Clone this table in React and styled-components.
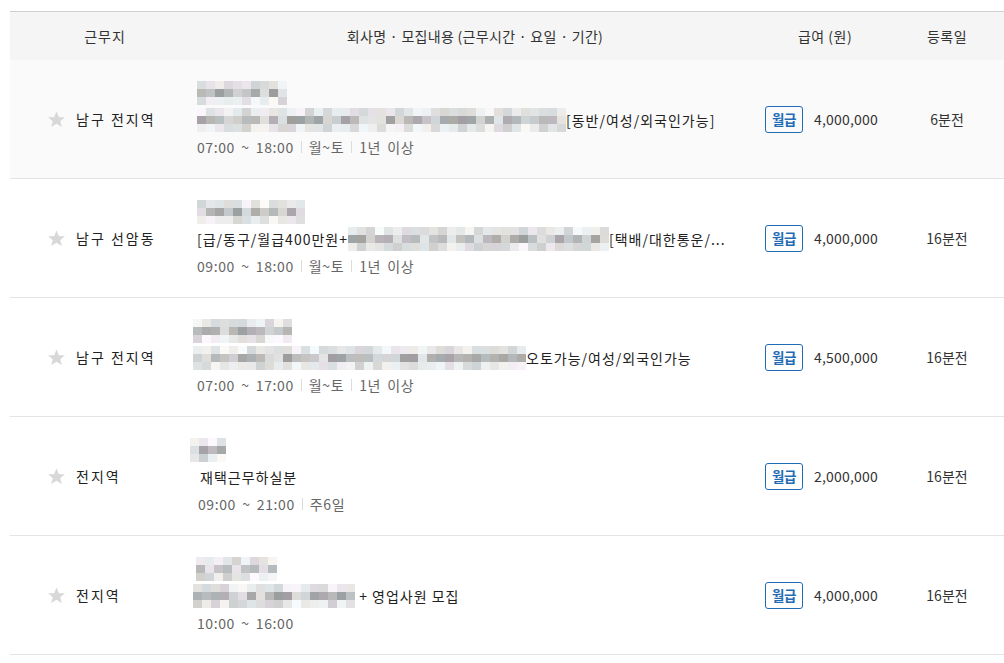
import React from 'react';
import styled, { createGlobalStyle } from 'styled-components';

const GlobalStyle = createGlobalStyle`
  html, body {
    margin: 0;
    padding: 0;
    background: #fff;
    font-family: 'Noto Sans CJK KR', 'Noto Sans', sans-serif;
    color: #222;
  }
`;

const Page = styled.div`
  padding: 11px 0 0 10px;
`;

const Table = styled.div`
  width: 994px;
  border-top: 1px solid #cfcfcf;
`;

const COLS = '180px 570px 130px 114px';

const HeadRow = styled.div`
  display: grid;
  grid-template-columns: ${COLS};
  height: 48px;
  align-items: center;
  background: #f5f5f5;
  font-size: 14px;
  color: #333;
`;

const HeadCell = styled.div`
  text-align: center;
  padding-left: ${p => p.$pl || 0}px;
  letter-spacing: ${p => p.$ls || 0}px;
`;

const Row = styled.div`
  display: grid;
  grid-template-columns: ${COLS};
  height: 118px;
  align-items: center;
  background: ${p => (p.$hl ? '#fafafa' : '#fff')};
  border-bottom: 1px solid #e4e4e4;
`;

const Place = styled.div`
  display: flex;
  align-items: center;
  padding-left: 37px;
  font-size: 14px;
  color: #222;
  letter-spacing: 2px;
`;

const Star = styled.svg`
  width: 19px;
  height: 19px;
  margin-right: 10px;
  flex: none;
`;

const Info = styled.div`
  display: flex;
  flex-direction: column;
  padding-left: ${p => p.$pad}px;
`;

const Company = styled.div`
  height: 24px;
  margin-left: ${p => p.$shift || 0}px;
  display: flex;
  align-items: center;
`;

const Title = styled.div`
  margin-top: 3px;
  margin-left: ${p => p.$shift || 0}px;
  height: 24px;
  display: flex;
  align-items: center;
  font-size: 14px;
  color: #222;
  white-space: pre;
  letter-spacing: 1px;
`;

const Meta = styled.div`
  margin-top: 5px;
  margin-left: ${p => p.$shift || 0}px;
  display: flex;
  align-items: center;
  font-size: 14px;
  color: #666;
  line-height: 20px;
  letter-spacing: 0.6px;
  word-spacing: 2.5px;
  white-space: pre;
`;

const Sep = styled.span`
  display: inline-block;
  width: 1px;
  height: 12px;
  background: #dcdcdc;
  margin: 0 7px;
`;

const Grid = styled.span`
  display: inline-grid;
  grid-auto-flow: column;
  grid-template-rows: repeat(3, 8px);
  flex: none;
`;

const Cell = styled.span`
  width: 9px;
  height: 8px;
`;

const Pay = styled.div`
  display: flex;
  align-items: center;
  padding-left: 5px;
`;

const Badge = styled.span`
  box-sizing: border-box;
  display: inline-flex;
  align-items: center;
  justify-content: center;
  width: 38px;
  height: 27px;
  border: 1px solid #1f6cb5;
  border-radius: 3px;
  color: #1f6cb5;
  font-size: 13.5px;
  font-weight: 700;
  letter-spacing: -0.3px;
  margin-right: 11px;
`;

const Amount = styled.span`
  font-size: 14px;
  color: #333;
  letter-spacing: 0.2px;
`;

const Date = styled.div`
  text-align: center;
  font-size: 14px;
  color: #333;
`;

function rng(seed) {
  let s = seed * 9301 + 49297;
  return () => {
    s = (s * 9301 + 49297) % 233280;
    return s / 233280;
  };
}

const tints = [[0, 0, 0], [4, 0, 6], [-3, 2, 4], [3, 2, -2], [0, 3, 3]];

function Mosaic({ w, seed }) {
  const r = rng(seed);
  const cols = Math.round(w / 9);
  const cells = [];
  for (let c = 0; c < cols; c++) {
    for (let row = 0; row < 3; row++) {
      const x = r();
      let v;
      if (row === 1) v = 155 + Math.floor(x * 75);
      else if (row === 0) v = 210 + Math.floor(x * 40);
      else v = 205 + Math.floor(x * 45);
      const t = tints[Math.floor(r() * tints.length)];
      const col = `rgb(${v + t[0]},${v + t[1]},${v + t[2]})`;
      cells.push(<Cell key={c + '-' + row} style={{ background: col }} />);
    }
  }
  return <Grid>{cells}</Grid>;
}

function StarIcon() {
  return (
    <Star viewBox="0 0 24 24">
      <polygon
        points="12,1.8 15,9 22.6,9.3 16.7,14.1 18.8,21.6 12,17.3 5.2,21.6 7.3,14.1 1.4,9.3 9,9"
        fill="#d8d8d8"
      />
    </Star>
  );
}

const jobs = [
  {
    place: '남구 전지역', pad: 7, co: 91,
    title: [['m', 373], ['t', '[동반/여성/외국인가능]']],
    meta: ['07:00 ~ 18:00', '월~토', '1년 이상'],
    amount: '4,000,000', date: '6분전', hl: true,
  },
  {
    place: '남구 선암동', pad: 7, co: 109,
    title: [['t', '[급/동구/월급400만원+'], ['m', 259], ['t', '[택배/대한통운/...']],
    meta: ['09:00 ~ 18:00', '월~토', '1년 이상'],
    amount: '4,000,000', date: '16분전',
  },
  {
    place: '남구 전지역', pad: 3, co: 100, metaShift: 4,
    title: [['m', 335], ['t', '오토가능/여성/외국인가능']],
    meta: ['07:00 ~ 17:00', '월~토', '1년 이상'],
    amount: '4,500,000', date: '16분전',
  },
  {
    place: '전지역', pad: 0, co: 38, titleShift: 10, metaShift: 8,
    title: [['t', '재택근무하실분']],
    meta: ['09:00 ~ 21:00', '주6일'],
    amount: '2,000,000', date: '16분전',
  },
  {
    place: '전지역', pad: 3, co: 78, coShift: 3, metaShift: 4,
    title: [['m', 162], ['t', ' + 영업사원 모집']],
    meta: ['10:00 ~ 16:00'],
    amount: '4,000,000', date: '16분전',
  },
];

export default function App() {
  return (
    <Page>
      <GlobalStyle />
      <Table>
        <HeadRow>
          <HeadCell $ls={1} $pl={10}>근무지</HeadCell>
          <HeadCell $ls={0.3}>회사명 · 모집내용 (근무시간 · 요일 · 기간)</HeadCell>
          <HeadCell $ls={0.5}>급여 (원)</HeadCell>
          <HeadCell $ls={0.5}>등록일</HeadCell>
        </HeadRow>
        {jobs.map((j, i) => (
          <Row key={i} $hl={j.hl}>
            <Place>
              <StarIcon />
              {j.place}
            </Place>
            <Info $pad={j.pad}>
              <Company $shift={j.coShift}>
                <Mosaic w={j.co} seed={i * 7 + 3} />
              </Company>
              <Title $shift={j.titleShift}>
                {j.title.map(([k, v], n) =>
                  k === 'm' ? <Mosaic key={n} w={v} seed={i * 13 + n + 11} /> : <span key={n}>{v}</span>
                )}
              </Title>
              <Meta $shift={j.metaShift}>
                {j.meta.map((m, n) => (
                  <React.Fragment key={n}>
                    {n > 0 && <Sep />}
                    <span>{m}</span>
                  </React.Fragment>
                ))}
              </Meta>
            </Info>
            <Pay>
              <Badge>월급</Badge>
              <Amount>{j.amount}</Amount>
            </Pay>
            <Date>{j.date}</Date>
          </Row>
        ))}
      </Table>
    </Page>
  );
}
